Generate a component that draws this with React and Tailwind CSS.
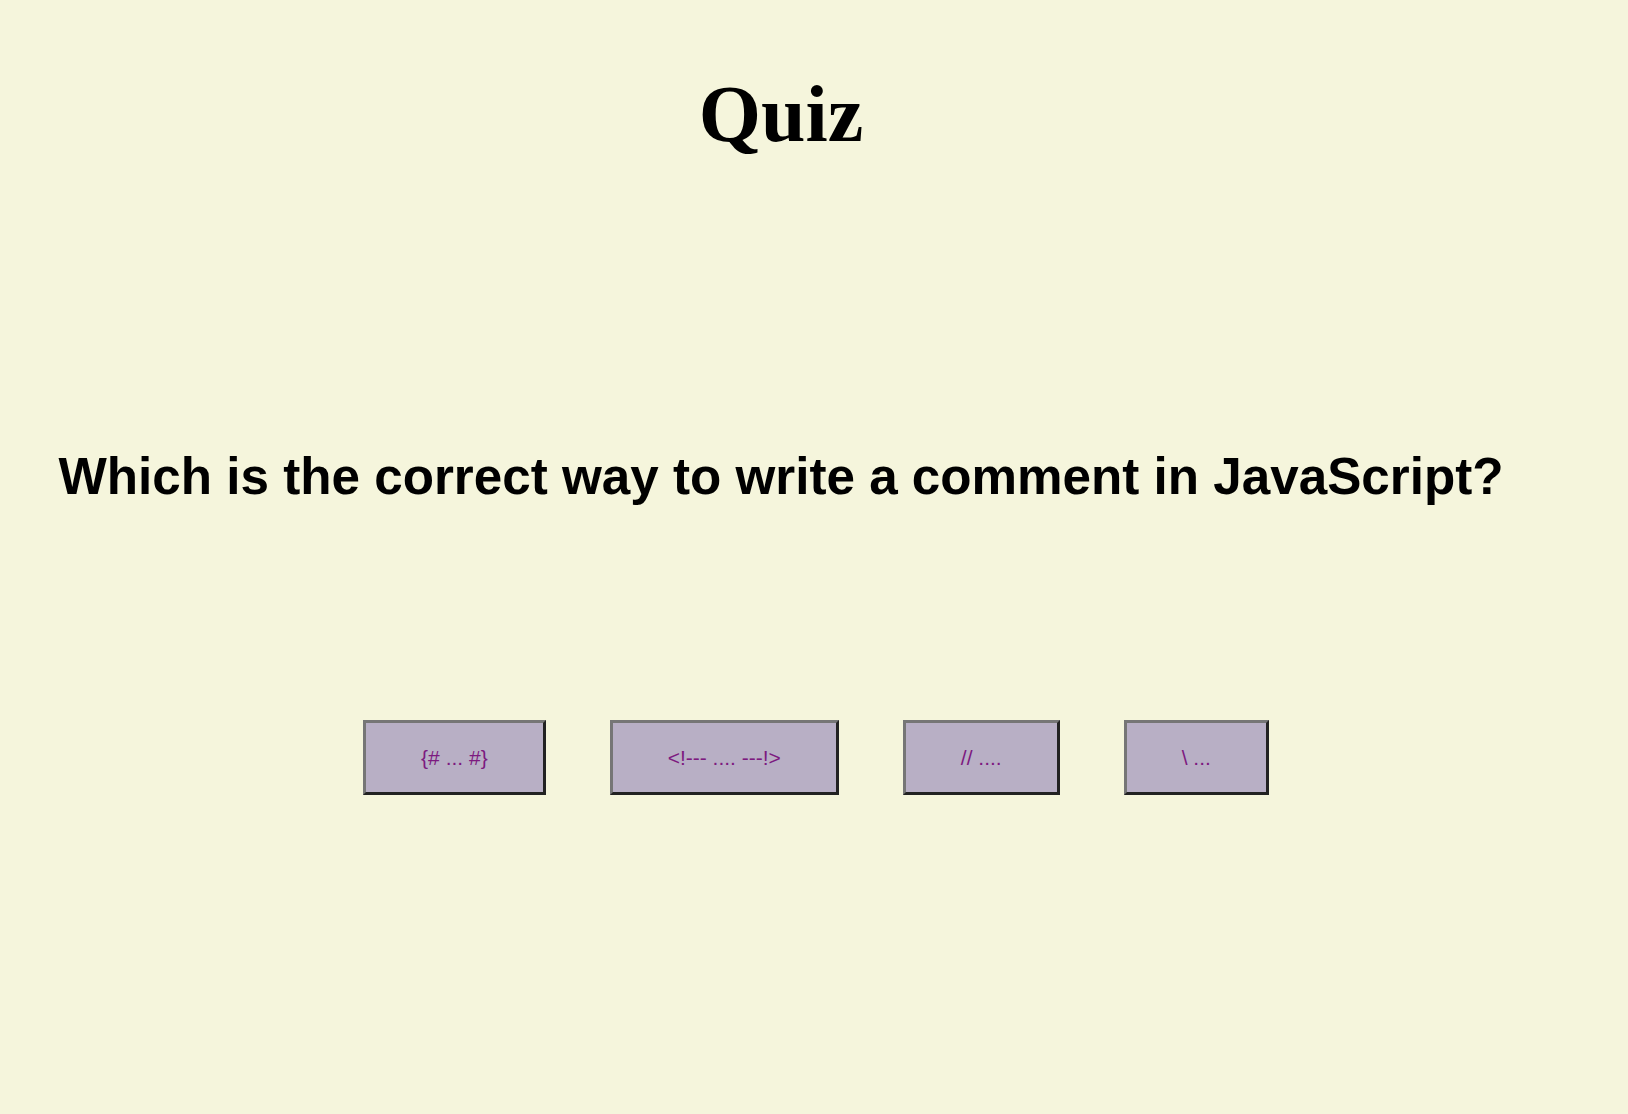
export default function App() {
  const options = ["{# ... #}", "<!--- .... ---!>", "// ....", "\\ ..."];
  return (
    <div className="min-h-[1114px] w-full bg-[#f5f5dc] overflow-hidden">
      <div className="w-[1562px] flex flex-col items-center">
        <h1
          className="mt-[74px] text-[80px] leading-none font-bold text-black text-center"
          style={{ fontFamily: '"Liberation Serif", "Times New Roman", serif' }}
        >
          Quiz
        </h1>
        <h2
          className="mt-[297px] h-[52px] text-[51.2px] leading-[52px] font-bold text-black text-center whitespace-nowrap"
          style={{ fontFamily: '"Liberation Sans", Arial, sans-serif' }}
        >
          Which is the correct way to write a comment in JavaScript?
        </h2>
      </div>
      <div className="mt-[217px] pl-[4px] flex justify-center gap-[64px]">
        {options.map((o) => (
          <button
            key={o}
            className="h-[75px] px-[55px] bg-[#b8afc5] text-[#7d1a80] text-[21px] border-[3px] border-t-[#767676] border-l-[#767676] border-b-[#222222] border-r-[#222222] whitespace-pre"
            style={{ fontFamily: '"Liberation Sans", Arial, sans-serif' }}
          >
            {o}
          </button>
        ))}
      </div>
    </div>
  );
}
